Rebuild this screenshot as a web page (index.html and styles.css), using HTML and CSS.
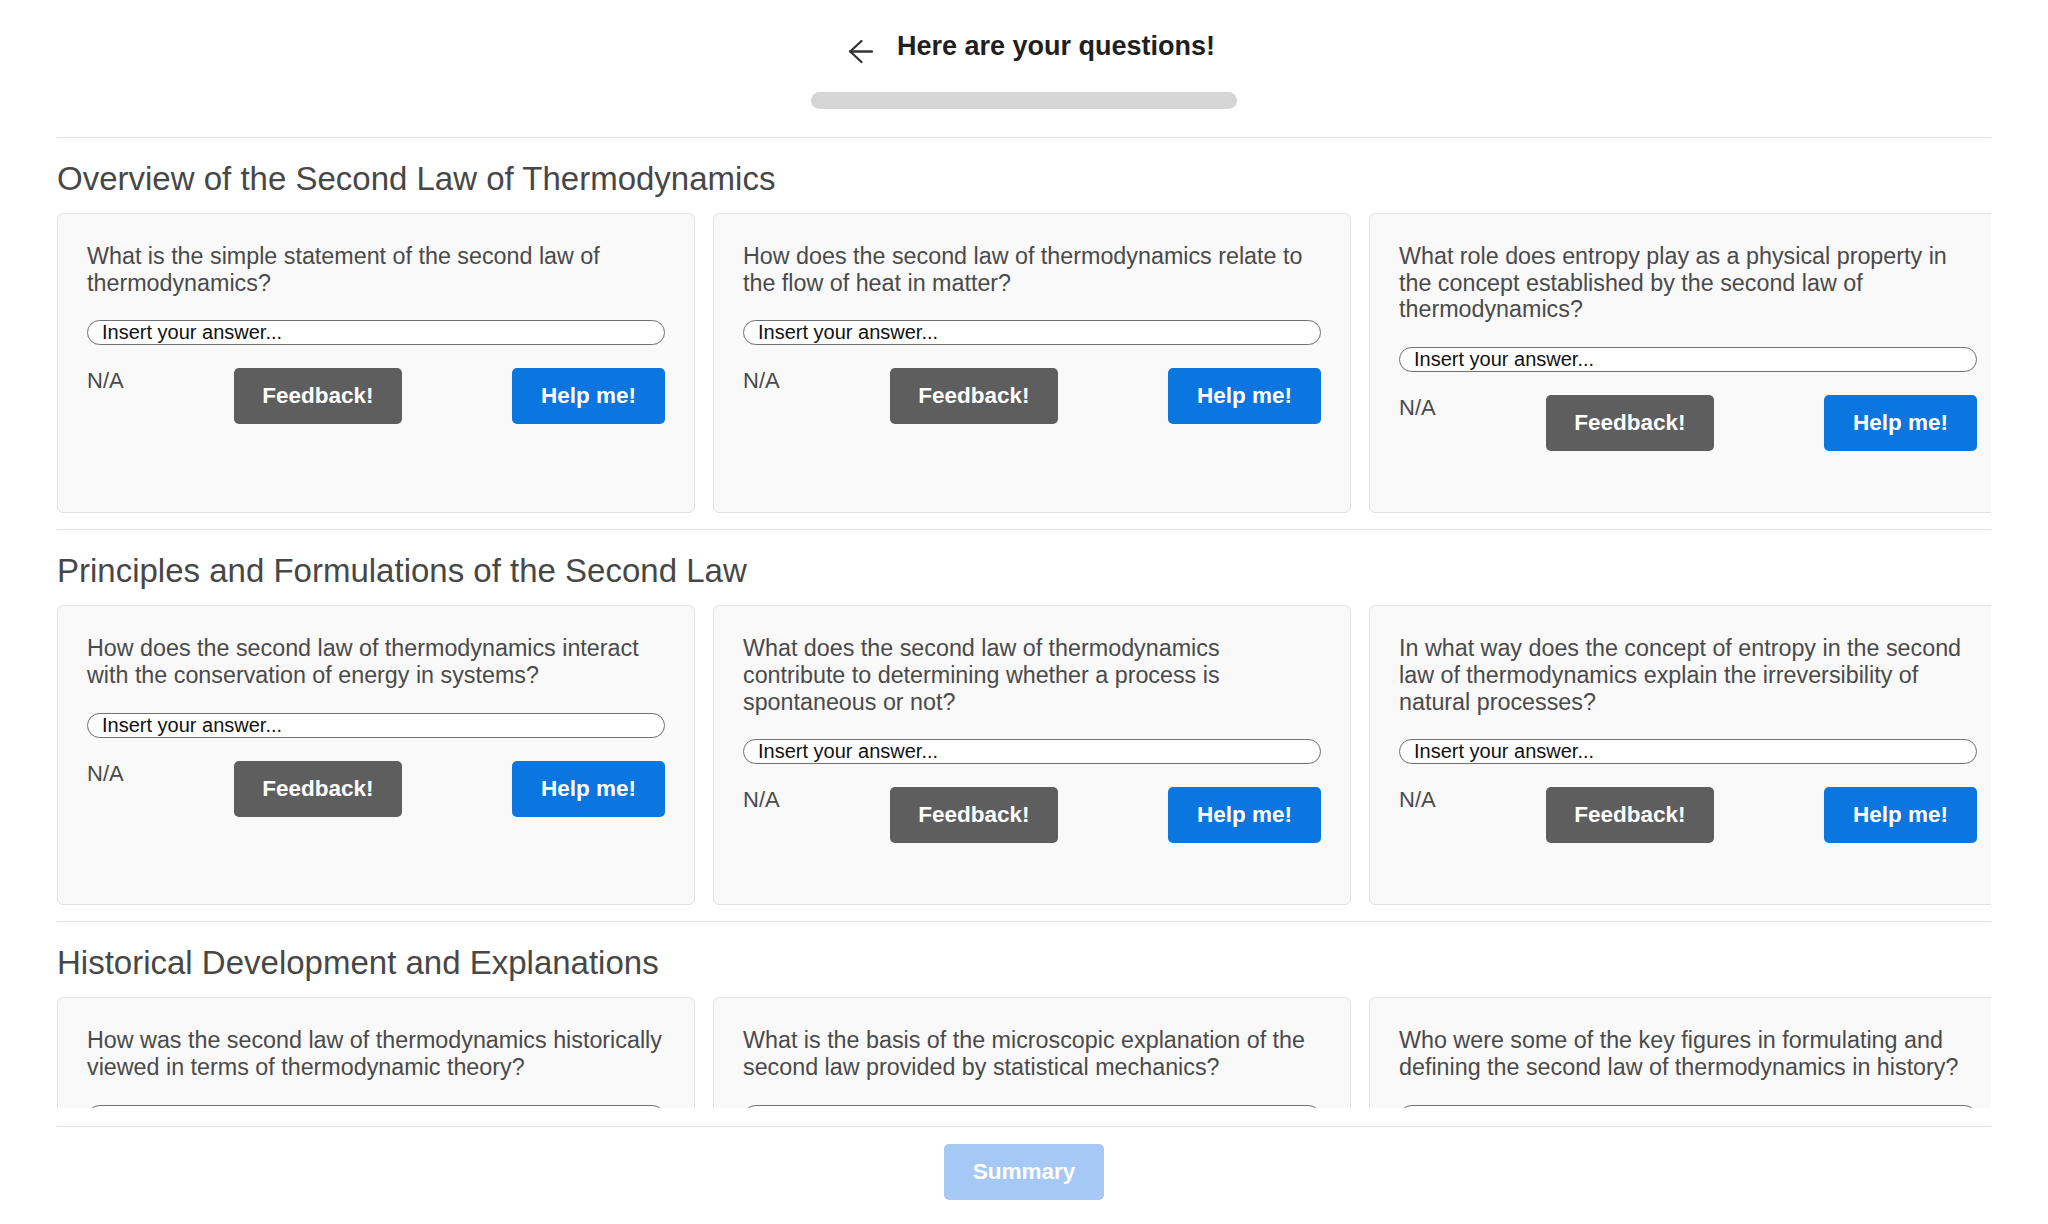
FILE: index.html
```html
<!DOCTYPE html>
<html lang="en">
<head>
<meta charset="utf-8">
<title>Here are your questions!</title>
<link rel="stylesheet" href="styles.css">
</head>
<body>
<div class="page">
  <header class="top">
    <div class="title-row">
      <button class="back" type="button" aria-label="Back">
        <svg width="24" height="24" viewBox="0 0 24 24" fill="none" stroke="currentColor" stroke-width="2.3" stroke-linecap="round" stroke-linejoin="round"><path d="M23 11.5H1.2"/><path d="M12.5 1L1.2 11.5L12.5 22"/></svg>
      </button>
      <h1 class="title">Here are your questions!</h1>
    </div>
    <div class="progress"></div>
  </header>

  <main class="scroll">
    <section class="section">
      <h2 class="section-title">Overview of the Second Law of Thermodynamics</h2>
      <div class="cards">
        <div class="card">
          <p class="question">What is the simple statement of the second law of thermodynamics?</p>
          <input class="answer" type="text" placeholder="Insert your answer...">
          <div class="actions"><span class="score">N/A</span><button class="btn btn-feedback" type="button">Feedback!</button><button class="btn btn-help" type="button">Help me!</button></div>
        </div>
        <div class="card">
          <p class="question">How does the second law of thermodynamics relate to the flow of heat in matter?</p>
          <input class="answer" type="text" placeholder="Insert your answer...">
          <div class="actions"><span class="score">N/A</span><button class="btn btn-feedback" type="button">Feedback!</button><button class="btn btn-help" type="button">Help me!</button></div>
        </div>
        <div class="card">
          <p class="question">What role does entropy play as a physical property in the concept established by the second law of thermodynamics?</p>
          <input class="answer" type="text" placeholder="Insert your answer...">
          <div class="actions"><span class="score">N/A</span><button class="btn btn-feedback" type="button">Feedback!</button><button class="btn btn-help" type="button">Help me!</button></div>
        </div>
      </div>
    </section>

    <section class="section">
      <h2 class="section-title">Principles and Formulations of the Second Law</h2>
      <div class="cards">
        <div class="card">
          <p class="question">How does the second law of thermodynamics interact with the conservation of energy in systems?</p>
          <input class="answer" type="text" placeholder="Insert your answer...">
          <div class="actions"><span class="score">N/A</span><button class="btn btn-feedback" type="button">Feedback!</button><button class="btn btn-help" type="button">Help me!</button></div>
        </div>
        <div class="card">
          <p class="question">What does the second law of thermodynamics contribute to determining whether a process is spontaneous or not?</p>
          <input class="answer" type="text" placeholder="Insert your answer...">
          <div class="actions"><span class="score">N/A</span><button class="btn btn-feedback" type="button">Feedback!</button><button class="btn btn-help" type="button">Help me!</button></div>
        </div>
        <div class="card">
          <p class="question">In what way does the concept of entropy in the second law of thermodynamics explain the irreversibility of natural processes?</p>
          <input class="answer" type="text" placeholder="Insert your answer...">
          <div class="actions"><span class="score">N/A</span><button class="btn btn-feedback" type="button">Feedback!</button><button class="btn btn-help" type="button">Help me!</button></div>
        </div>
      </div>
    </section>

    <section class="section">
      <h2 class="section-title">Historical Development and Explanations</h2>
      <div class="cards">
        <div class="card">
          <p class="question">How was the second law of thermodynamics historically viewed in terms of thermodynamic theory?</p>
          <input class="answer" type="text" placeholder="Insert your answer...">
          <div class="actions"><span class="score">N/A</span><button class="btn btn-feedback" type="button">Feedback!</button><button class="btn btn-help" type="button">Help me!</button></div>
        </div>
        <div class="card">
          <p class="question">What is the basis of the microscopic explanation of the second law provided by statistical mechanics?</p>
          <input class="answer" type="text" placeholder="Insert your answer...">
          <div class="actions"><span class="score">N/A</span><button class="btn btn-feedback" type="button">Feedback!</button><button class="btn btn-help" type="button">Help me!</button></div>
        </div>
        <div class="card">
          <p class="question">Who were some of the key figures in formulating and defining the second law of thermodynamics in history?</p>
          <input class="answer" type="text" placeholder="Insert your answer...">
          <div class="actions"><span class="score">N/A</span><button class="btn btn-feedback" type="button">Feedback!</button><button class="btn btn-help" type="button">Help me!</button></div>
        </div>
      </div>
    </section>
  </main>

  <footer class="bottom">
    <button class="btn btn-summary" type="button">Summary</button>
  </footer>
</div>
</body>
</html>
```

FILE: styles.css
```css
* {
  box-sizing: border-box;
}

html, body {
  margin: 0;
  padding: 0;
  background: #ffffff;
}

body {
  font-family: "Liberation Sans", Arial, Helvetica, sans-serif;
  color: #4a4a4a;
}

.page {
  height: 100vh;
  display: flex;
  flex-direction: column;
  overflow: hidden;
}

/* Header */
.top {
  flex: 0 0 137px;
  display: flex;
  flex-direction: column;
  align-items: center;
  padding-top: 30px;
}

.title-row {
  display: flex;
  align-items: flex-start;
  justify-content: center;
  gap: 24px;
  padding-left: 16px;
  width: 100%;
}

.back {
  margin: 10px 0 0 0;
  padding: 0;
  border: 0;
  background: none;
  width: 24px;
  height: 24px;
  color: #333333;
  display: flex;
  cursor: pointer;
}

.title {
  margin: 0;
  font-size: 27px;
  line-height: 32px;
  font-weight: 700;
  color: #1f1f1f;
}

.progress {
  margin-top: 28px;
  width: 426px;
  height: 17px;
  border-radius: 9px;
  background: #d5d5d5;
}

/* Scrolling area */
.scroll {
  flex: 1 1 auto;
  min-height: 0;
  margin: 0 57px;
  overflow: hidden;
}

.section {
  border-top: 1px solid #e1e1e1;
  padding: 22px 0 16px;
}

.section-title {
  margin: 0 0 15px;
  font-size: 33px;
  line-height: 38px;
  font-weight: 400;
  color: #474747;
}

.cards {
  display: flex;
  gap: 18px;
  align-items: stretch;
}

.card {
  flex: 0 0 638px;
  background: #f9f9f9;
  border: 1px solid #e2e2e2;
  border-radius: 6px;
  padding: 29px 29px 61px;
  display: flex;
  flex-direction: column;
}

.question {
  margin: 0;
  font-size: 23.3px;
  line-height: 26.7px;
  color: #4a4a4a;
}

.answer {
  display: block;
  width: 100%;
  height: 25px;
  margin-top: 24px;
  padding: 0 14px;
  border: 1px solid #707070;
  border-radius: 13px;
  background: #ffffff;
  font-family: "Liberation Sans", Arial, Helvetica, sans-serif;
  font-size: 20px;
  color: #000000;
  outline: none;
}

.answer::placeholder {
  color: #111111;
  opacity: 1;
}

.actions {
  margin-top: 23px;
  display: flex;
  justify-content: space-between;
  align-items: flex-start;
}

.score {
  font-size: 22px;
  line-height: 26px;
  color: #4a4a4a;
}

.btn {
  height: 56px;
  padding: 0 20px;
  border: 0;
  border-radius: 5px;
  font-family: "Liberation Sans", Arial, Helvetica, sans-serif;
  font-size: 22.5px;
  font-weight: 700;
  color: #ffffff;
  cursor: pointer;
}

.btn-feedback {
  background: #5e5e5e;
  width: 168px;
}

.btn-help {
  background: #0b75e0;
  width: 153px;
}

/* Footer */
.bottom {
  flex: 0 0 116px;
  margin: 0 57px;
  padding-top: 36px;
  display: flex;
  justify-content: center;
  align-items: flex-start;
  position: relative;
}

.bottom::before {
  content: "";
  position: absolute;
  left: 0;
  right: 0;
  top: 18px;
  border-top: 1px solid #e1e1e1;
}

.btn-summary {
  width: 160px;
  background: #a6c8f4;
}
```
